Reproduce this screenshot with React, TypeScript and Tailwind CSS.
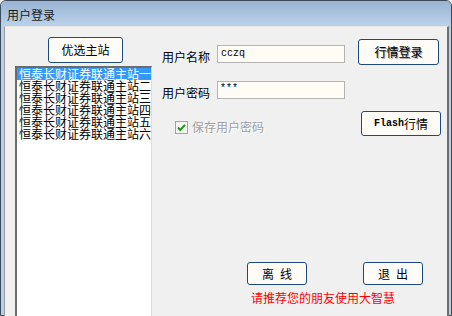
import React from 'react';

const cjk = "font-['Noto_Sans_CJK_SC',_'Noto_Sans',_sans-serif]";
const mono = "font-['Liberation_Mono',_'DejaVu_Sans_Mono',_monospace]";

const stations = [
  '恒泰长财证券联通主站一',
  '恒泰长财证券联通主站二',
  '恒泰长财证券联通主站三',
  '恒泰长财证券联通主站四',
  '恒泰长财证券联通主站五',
  '恒泰长财证券联通主站六',
];

const Btn = ({ className = '', children }: { className?: string; children: React.ReactNode }) => (
  <div
    className={`flex items-center justify-center rounded-[3px] border border-[#1d4a7c] bg-[#fffcf8] text-[12px] leading-[12px] text-black ${className}`}
  >
    {children}
  </div>
);

const App = () => {
  return (
    <div className={`w-[452px] h-[316px] overflow-hidden bg-[#f0f0f0] ${cjk}`}>
      <div className="w-[452px] h-[316px] flex flex-col rounded-t-[6px] border border-[#3c4b5c] bg-[#b7cfe8]">
        {/* title */}
        <div className="h-[25px] shrink-0 flex items-center pl-[6px] rounded-t-[5px] bg-gradient-to-b from-[#98b3d1] to-[#bcd2ea]">
          <span className="text-[12px] leading-[12px] text-[#1a1a1a] mt-[2px]">用户登录</span>
        </div>

        {/* body */}
        <div className="flex-1 ml-[3px] mr-[2px] mb-[2px] flex border-t border-l border-t-[#e6e6e6] border-l-[#9a9a9a] border-r-2 border-b-2 border-r-[#6e6e6e] border-b-[#8c8c8c] bg-[#f0f0f0]">
          {/* left column */}
          <div className="ml-[10px] w-[137px] shrink-0 flex flex-col">
            <Btn className="ml-[33px] mt-[10px] w-[75px] h-[26px]">优选主站</Btn>
            <div className="mt-[3px] h-[252px] shrink-0 bg-white border-l-2 border-t-2 border-l-[#6c6c6c] border-t-[#6c6c6c] border-r border-r-[#dcdcdc] overflow-hidden">
              {stations.map((s, i) => (
                <div
                  key={s}
                  className={`h-[12px] pl-[2px] whitespace-nowrap text-[12px] leading-[12px] ${
                    i === 0 ? 'bg-[#3399ff] text-white' : 'text-black'
                  }`}
                >
                  {s}
                </div>
              ))}
            </div>
          </div>

          {/* right column */}
          <div className="ml-[10px] w-[280px] flex flex-col">
            <div className="mt-[12px] flex items-start h-[25px]">
              <span className="w-[55px] mt-[12px] text-[12px] leading-[12px] text-black">用户名称</span>
              <div className={`mt-[6px] w-[128px] h-[18px] border border-[#b4b4b4] bg-[#fffbf5] pl-[3px] text-[10px] leading-[16px] text-black ${mono}`}>
                cczq
              </div>
              <Btn className="ml-[13px] w-[81px] h-[26px]">
                <span className="[text-shadow:1px_1px_0_#9a9a9a]">行情登录</span>
              </Btn>
            </div>

            <div className="mt-[17px] flex items-start">
              <span className="w-[55px] mt-[6px] text-[12px] leading-[12px] text-black">用户密码</span>
              <div className={`w-[128px] h-[18px] border border-[#b4b4b4] bg-[#fffbf5] pl-[2px] text-[10px] leading-[14px] text-black ${mono}`}>
                ***
              </div>
            </div>

            <div className="mt-[12px] flex items-start">
              <div className="ml-[13px] mt-[10px] w-[13px] h-[13px] border border-[#a4a4a4] bg-[#f6f6f2] flex items-center justify-center">
                <svg width="9" height="9" viewBox="0 0 9 9">
                  <path d="M1 4.5 L3.3 7 L8 1.8" fill="none" stroke="#1f9a1f" strokeWidth="2" />
                </svg>
              </div>
              <span className="ml-[4px] mt-[10px] text-[12px] leading-[12px] text-[#a0a0a0] [text-shadow:1px_1px_0_#ffffff]">
                保存用户密码
              </span>
              <Btn className="ml-auto mr-[1px] w-[80px] h-[25px]">
                <span className={`${mono} text-[10px] font-bold`}>Flash</span>
                <span>行情</span>
              </Btn>
            </div>

            <div className="mt-[126px] flex">
              <Btn className="ml-[85px] w-[60px] h-[23px] gap-[6px]">
                <span>离</span>
                <span>线</span>
              </Btn>
              <Btn className="ml-[56px] w-[60px] h-[23px] gap-[6px]">
                <span>退</span>
                <span>出</span>
              </Btn>
            </div>

            <div className="ml-[89px] mt-[7px] text-[12px] leading-[12px] text-[#ff0000] whitespace-nowrap">
              请推荐您的朋友使用大智慧
            </div>
          </div>
        </div>
      </div>
    </div>
  );
};

export default App;
